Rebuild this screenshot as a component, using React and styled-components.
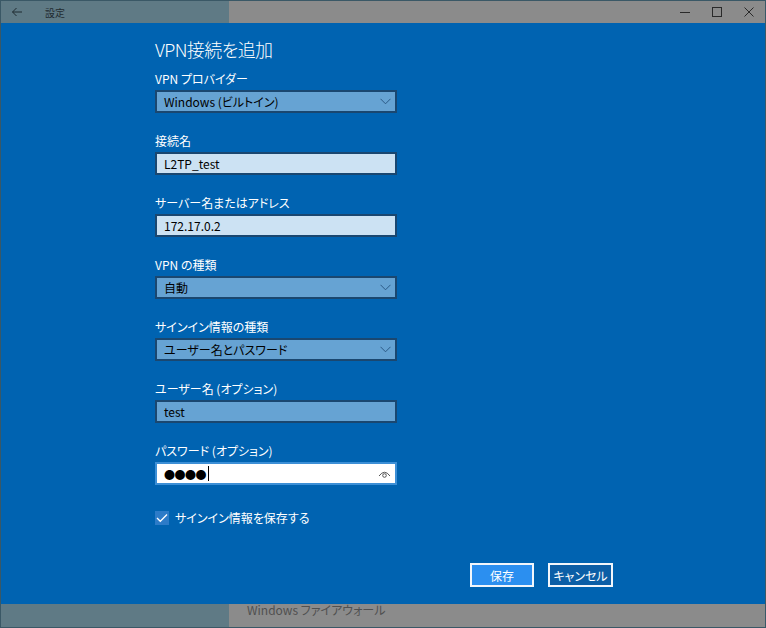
import React from "react";
import styled, { createGlobalStyle } from "styled-components";

const Global = createGlobalStyle`
  html, body { margin: 0; padding: 0; background: #3a5866; }
  body {
    font-family: "Noto Sans CJK JP", "Noto Sans", sans-serif;
    font-feature-settings: "palt";
  }
`;

const Frame = styled.div`
  width: 766px;
  height: 628px;
  box-sizing: border-box;
  border: 1px solid #3a5866;
  display: flex;
  flex-direction: column;
  overflow: hidden;
  background: #8b8b8b;
`;

const BackStrip = styled.div`
  display: grid;
  grid-template-columns: 228px 1fr;
  height: ${(p) => p.h}px;
  flex-shrink: 0;
`;

const Side = styled.div`
  background: #5f7a85;
  display: flex;
  align-items: center;
  gap: 22px;
  padding-left: 10px;
  color: #1f2b31;
  font-size: 10px;
`;

const Pane = styled.div`
  background: #8b8b8b;
  display: flex;
  align-items: ${(p) => (p.end ? "center" : "flex-start")};
  justify-content: ${(p) => (p.end ? "flex-end" : "flex-start")};
  padding-left: ${(p) => (p.end ? 0 : 18)}px;
  color: #505050;
  font-size: 12px;
  line-height: 12px;
`;

const WinBtn = styled.div`
  width: 32px;
  height: 22px;
  display: flex;
  align-items: center;
  justify-content: center;
`;

const Dialog = styled.div`
  flex: 1;
  background: #0063b1;
  padding: 12px 0 0 154px;
  color: #fff;
  display: flex;
  flex-direction: column;
`;

const Title = styled.h1`
  margin: 0 0 8px;
  font-weight: 300;
  font-size: 18px;
  line-height: 28px;
  letter-spacing: -0.6px;
`;

const Field = styled.div`
  display: flex;
  flex-direction: column;
  gap: 3px;
  margin-bottom: 20px;
`;

const Label = styled.div`
  font-size: 12px;
  line-height: 16px;
`;

const Box = styled.div`
  width: 242px;
  height: 23px;
  box-sizing: border-box;
  border: 2px solid ${(p) => (p.focus ? "#3c8fd6" : "#1a4770")};
  background: ${(p) =>
    p.focus ? "#ffffff" : p.light ? "#cce2f3" : "#66a3d3"};
  display: flex;
  align-items: center;
  justify-content: space-between;
  padding: 0 4px 0 7px;
  color: #000;
  font-size: 12px;
`;

const Dots = styled.span`
  font-size: 11px;
  letter-spacing: -0.5px;
  display: flex;
  align-items: center;
`;

const Caret = styled.span`
  width: 1px;
  height: 15px;
  background: #000;
  margin-left: 2px;
`;

const CheckRow = styled.label`
  display: flex;
  align-items: center;
  gap: 6px;
  margin-top: 5px;
  font-size: 12px;
  line-height: 16px;
`;

const CheckBox = styled.span`
  width: 14px;
  height: 14px;
  background: #2c7bc8;
  display: flex;
  align-items: center;
  justify-content: center;
`;

const Actions = styled.div`
  display: flex;
  gap: 14px;
  margin: 37px 0 0 315px;
`;

const Button = styled.button`
  width: ${(p) => p.w}px;
  height: 24px;
  box-sizing: border-box;
  border: 2px solid #f2f6fb;
  background: ${(p) => (p.primary ? "#2b8ff0" : "#0b5ea6")};
  color: #fff;
  font-family: inherit;
  font-feature-settings: "palt";
  font-size: 12px;
  padding: 0;
`;

const Chevron = () => (
  <svg width="11" height="7" viewBox="0 0 11 7">
    <path d="M0.5 0.8 L5.5 5.8 L10.5 0.8" fill="none" stroke="#2c5a86" strokeWidth="1" />
  </svg>
);

export default function App() {
  return (
    <>
      <Global />
      <Frame>
        <BackStrip h={22}>
          <Side>
            <svg width="12" height="10" viewBox="0 0 12 10">
              <path d="M11 5 H1.5 M5.5 1 L1.5 5 L5.5 9" fill="none" stroke="#1f2b31" strokeWidth="1" />
            </svg>
            <span>設定</span>
          </Side>
          <Pane end>
            <WinBtn>
              <svg width="10" height="10" viewBox="0 0 10 10"><path d="M0 5.5 H10" stroke="#2a2a2a" /></svg>
            </WinBtn>
            <WinBtn>
              <svg width="10" height="10" viewBox="0 0 10 10"><rect x="0.5" y="0.5" width="9" height="9" fill="none" stroke="#2a2a2a" /></svg>
            </WinBtn>
            <WinBtn>
              <svg width="10" height="10" viewBox="0 0 10 10"><path d="M0.5 0.5 L9.5 9.5 M9.5 0.5 L0.5 9.5" stroke="#2a2a2a" /></svg>
            </WinBtn>
          </Pane>
        </BackStrip>
        <Dialog>
          <Title>VPN接続を追加</Title>
          <Field>
            <Label>VPN プロバイダー</Label>
            <Box>Windows (ビルトイン)<Chevron /></Box>
          </Field>
          <Field>
            <Label>接続名</Label>
            <Box light>L2TP_test</Box>
          </Field>
          <Field>
            <Label>サーバー名またはアドレス</Label>
            <Box light>172.17.0.2</Box>
          </Field>
          <Field>
            <Label>VPN の種類</Label>
            <Box>自動<Chevron /></Box>
          </Field>
          <Field>
            <Label>サインイン情報の種類</Label>
            <Box>ユーザー名とパスワード<Chevron /></Box>
          </Field>
          <Field>
            <Label>ユーザー名 (オプション)</Label>
            <Box>test</Box>
          </Field>
          <Field>
            <Label>パスワード (オプション)</Label>
            <Box focus>
              <Dots>●●●●<Caret /></Dots>
              <svg width="13" height="10" viewBox="0 0 13 10">
                <path d="M1 7 Q6.5 -0.5 12 7" fill="none" stroke="#555" strokeWidth="1" />
                <circle cx="6.5" cy="6.5" r="1.8" fill="none" stroke="#555" strokeWidth="1" />
              </svg>
            </Box>
          </Field>
          <CheckRow>
            <CheckBox>
              <svg width="12" height="10" viewBox="0 0 12 10">
                <path d="M1 5 L4.3 8.3 L11 1.5" fill="none" stroke="#fff" strokeWidth="1.3" />
              </svg>
            </CheckBox>
            サインイン情報を保存する
          </CheckRow>
          <Actions>
            <Button primary w={64}>保存</Button>
            <Button w={65}>キャンセル</Button>
          </Actions>
        </Dialog>
        <BackStrip h={23}>
          <Side />
          <Pane>Windows ファイアウォール</Pane>
        </BackStrip>
      </Frame>
    </>
  );
}
